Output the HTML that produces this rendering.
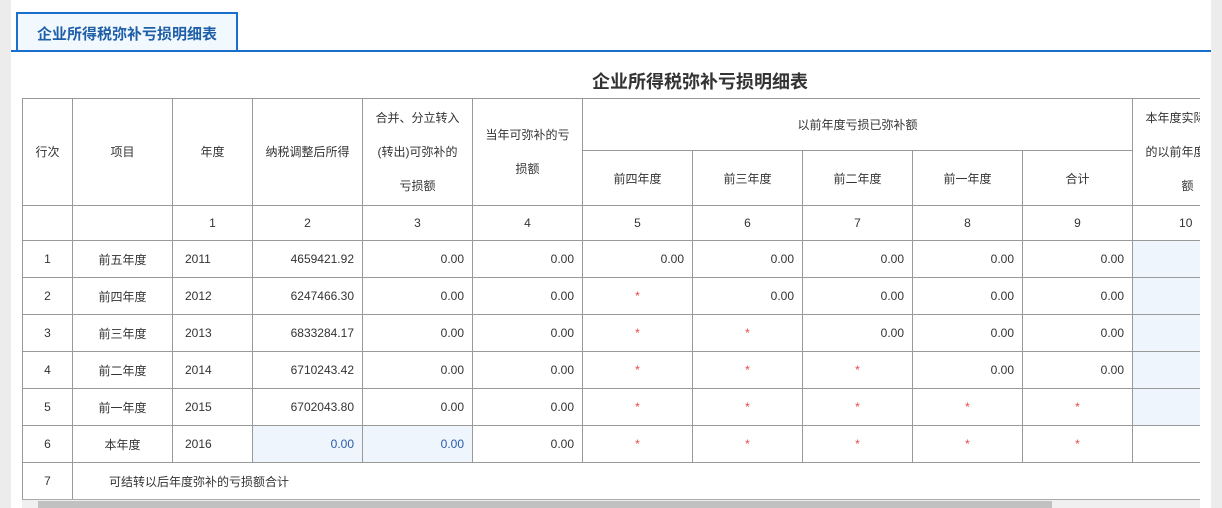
<!DOCTYPE html><html><head><meta charset="utf-8"><style>
body{margin:0;width:1222px;height:508px;background:#ececec;font-family:"Liberation Sans","Noto Sans CJK SC",sans-serif;overflow:hidden;position:relative}
.main{position:absolute;left:11px;top:0;width:1200px;height:508px;background:#fff;overflow:hidden}
.tab{position:absolute;left:5px;top:12px;width:218px;height:38px;border:2px solid #1a6fcc;border-bottom:none;background:#f2f9fe;color:#1f5fa8;font-weight:bold;font-size:15px;line-height:42px;text-align:center}
.line{position:absolute;left:0;top:50px;width:1200px;height:2px;background:#1a6fcc}
.title{position:absolute;left:489px;top:68px;width:400px;text-align:center;font-weight:bold;font-size:18px;color:#333}
.wrap{position:absolute;left:11px;top:98px;width:1178px;height:402px;overflow:hidden}
table{border-collapse:collapse;table-layout:fixed;font-size:12px;color:#333}
td{border:1px solid #999;text-align:center;padding:0 8px;overflow:hidden;white-space:nowrap}
.r{text-align:right}.l{text-align:left;padding-left:12px}
.s{color:#e44}.b{background:#eef5fd}.bl{color:#2a5aa8}
.hd td{white-space:normal;line-height:34px;padding:0 12px}
.sb{position:absolute;left:11px;top:499px;width:1178px;height:9px;background:#f0f0f0;border-top:1px solid #aaa}
.th{position:absolute;left:16px;top:1px;width:1014px;height:8px;background:#c1c1c1}
</style></head><body>
<div class="main">
<div class="tab">企业所得税弥补亏损明细表</div><div class="line"></div>
<div class="title">企业所得税弥补亏损明细表</div>
<div class="wrap"><table style="width:1220px">
<colgroup><col style="width:50px"><col style="width:100px"><col style="width:80px"><col style="width:110px"><col style="width:110px"><col style="width:110px"><col style="width:110px"><col style="width:110px"><col style="width:110px"><col style="width:110px"><col style="width:110px"><col style="width:110px"></colgroup>
<tr class="hd" style="height:52px"><td rowspan="2">行次</td><td rowspan="2">项目</td><td rowspan="2">年度</td><td rowspan="2">纳税调整后所得</td><td rowspan="2">合并、分立转入(转出)可弥补的亏损额</td><td rowspan="2">当年可弥补的亏损额</td><td colspan="5">以前年度亏损已弥补额</td><td rowspan="2">本年度实际弥补的以前年度亏损额</td></tr>
<tr style="height:55px"><td>前四年度</td><td>前三年度</td><td>前二年度</td><td>前一年度</td><td>合计</td></tr>
<tr style="height:35px"><td></td><td></td><td>1</td><td>2</td><td>3</td><td>4</td><td>5</td><td>6</td><td>7</td><td>8</td><td>9</td><td style="text-align:left;padding-left:46px">10</td></tr>
<tr style="height:37px"><td>1</td><td>前五年度</td><td class="l">2011</td><td class="r">4659421.92</td><td class="r">0.00</td><td class="r">0.00</td><td class="r">0.00</td><td class="r">0.00</td><td class="r">0.00</td><td class="r">0.00</td><td class="r">0.00</td><td class="b"></td></tr>
<tr style="height:37px"><td>2</td><td>前四年度</td><td class="l">2012</td><td class="r">6247466.30</td><td class="r">0.00</td><td class="r">0.00</td><td class="s">*</td><td class="r">0.00</td><td class="r">0.00</td><td class="r">0.00</td><td class="r">0.00</td><td class="b"></td></tr>
<tr style="height:37px"><td>3</td><td>前三年度</td><td class="l">2013</td><td class="r">6833284.17</td><td class="r">0.00</td><td class="r">0.00</td><td class="s">*</td><td class="s">*</td><td class="r">0.00</td><td class="r">0.00</td><td class="r">0.00</td><td class="b"></td></tr>
<tr style="height:37px"><td>4</td><td>前二年度</td><td class="l">2014</td><td class="r">6710243.42</td><td class="r">0.00</td><td class="r">0.00</td><td class="s">*</td><td class="s">*</td><td class="s">*</td><td class="r">0.00</td><td class="r">0.00</td><td class="b"></td></tr>
<tr style="height:37px"><td>5</td><td>前一年度</td><td class="l">2015</td><td class="r">6702043.80</td><td class="r">0.00</td><td class="r">0.00</td><td class="s">*</td><td class="s">*</td><td class="s">*</td><td class="s">*</td><td class="s">*</td><td class="b"></td></tr>
<tr style="height:37px"><td>6</td><td>本年度</td><td class="l">2016</td><td class="r b bl">0.00</td><td class="r b bl">0.00</td><td class="r">0.00</td><td class="s">*</td><td class="s">*</td><td class="s">*</td><td class="s">*</td><td class="s">*</td><td></td></tr>
<tr style="height:37px"><td>7</td><td colspan="11" style="text-align:left;padding-left:36px">可结转以后年度弥补的亏损额合计</td></tr>
</table></div>
<div class="sb"><div class="th"></div></div>
</div>
</body></html>
